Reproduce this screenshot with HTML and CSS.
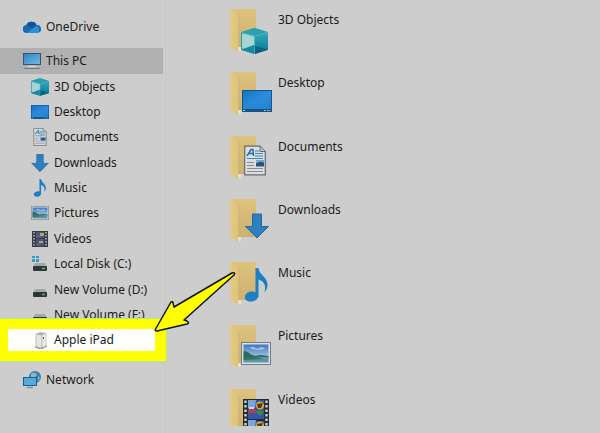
FILE: index.html
```html
<!DOCTYPE html>
<html lang="en">
<head>
<meta charset="utf-8">
<title>This PC</title>
<link rel="stylesheet" href="styles.css">
</head>
<body>
<svg class="defs" aria-hidden="true">
  <defs>
    <linearGradient id="g-screen" x1="0" y1="0" x2="1" y2="1"><stop offset="0" stop-color="#1473c4"/><stop offset=".5" stop-color="#2b8bda"/><stop offset="1" stop-color="#1478cc"/></linearGradient>
    <linearGradient id="g-pc" x1="0" y1="0" x2="1" y2="1"><stop offset="0" stop-color="#2d86c4"/><stop offset="1" stop-color="#72b9e4"/></linearGradient>
    <linearGradient id="g-front" x1="0" y1="0" x2="1" y2="0"><stop offset="0" stop-color="#e3cb86"/><stop offset="1" stop-color="#dcc27b"/></linearGradient>
    <linearGradient id="g-back" x1="0" y1="0" x2="0" y2="1"><stop offset="0" stop-color="#dec37e"/><stop offset="1" stop-color="#cbb06f"/></linearGradient>
    <linearGradient id="g-cube" x1="0" y1="0" x2="0" y2="1"><stop offset="0" stop-color="#35a9b8"/><stop offset="1" stop-color="#087494"/></linearGradient>
    <linearGradient id="g-sky" x1="0" y1="0" x2="0" y2="1"><stop offset="0" stop-color="#3d78c0"/><stop offset="1" stop-color="#d0e2ec"/></linearGradient>
  </defs>
  <symbol id="cube" viewBox="0 0 26 25">
    <path d="M13 0 26 4V21L13 25 0 21V4Z" fill="#2297ac"/>
    <path d="M0 4 13 0 26 4 13 8Z" fill="#2a9fb3"/>
    <path d="M1 5 13 8V19L1 20Z" fill="#a8d4d6"/>
    <path d="M0 21 13 16V25Z" fill="#168aa4"/>
    <path d="M13 8 26 4V21L13 25Z" fill="url(#g-cube)"/>
    <path d="M13 17 26 21 13 25Z" fill="#07637f"/>
    <path d="M0 4 13 8 26 4M13 8V25" fill="none" stroke="#5dbdc8" stroke-width=".7"/>
  </symbol>
  <symbol id="screen" viewBox="0 0 30 22" preserveAspectRatio="none">
    <rect width="30" height="22" fill="#16538a"/>
    <rect x="1" y="1" width="28" height="18" fill="url(#g-screen)"/>
    <path d="M29 1v18H10Z" fill="#3c99e2" opacity=".3"/>
    <path d="M1 20.500h2M22 20.500h1.500M25 20.500h1.500M27.500 20.500h1" stroke="#b5d5e8"/>
  </symbol>
  <symbol id="document" viewBox="0 0 22 30">
    <path d="M.7.7H16l5.300 5.300V29.300H.7Z" fill="#dcdedf" stroke="#666b70" stroke-width="1.200"/>
    <path d="M16 .7V6h5.300" fill="#bfc3c6" stroke="#666b70"/>
    <path d="M3 10.500 7 4h2l.5 6.500M5 8h4" fill="none" stroke="#216fae" stroke-width="1.500"/>
    <path d="M11 5.500h4M11 8h8M11 10.500h8M3 13h16" stroke="#3e89bd" stroke-width="1.200"/>
    <path d="M3 17h7M3 20h7M3 23h16M3 26h16" stroke="#858c91"/>
    <path d="M12 15h8v6h-8Z" fill="#265582"/><path d="M12 18q4-3 8-1v-2h-8Z" fill="#7baed2"/>
  </symbol>
  <symbol id="down" viewBox="0 0 24 25">
    <path d="M7.500.5h9V13h7L12 24.500.5 13h7Z" fill="#2f7fbd" stroke="#1f6ba8"/>
  </symbol>
  <symbol id="note" viewBox="0 0 23 34">
    <ellipse cx="6.500" cy="28.500" rx="6.800" ry="5" transform="rotate(-12 6.500 28.500)" fill="#1b7fc1"/>
    <path d="M10.500 0h3c.5 7 9 9 9 16.500 0 3-1 5.500-3 7.500 2-7-1-11-6-12.500V29h-3Z" fill="#1b7fc1"/>
  </symbol>
  <symbol id="picture" viewBox="0 0 30 23" preserveAspectRatio="none">
    <rect x=".5" y=".5" width="29" height="22" fill="#dce1e3" stroke="#737c83"/>
    <rect x="2.500" y="2.500" width="25" height="18" fill="url(#g-sky)"/>
    <path d="M2.500 9q4 0 7 3t10 1l8 1v2h-25Z" fill="#2c6a5c"/>
    <path d="M2.500 15h25v5.500h-25Z" fill="#5e95aa"/><path d="M2.500 15h13l7 2-20 1Z" fill="#34736a"/>
    <path d="M9 6q3-2 5 0t7-1l3 2q-8 2-15-1Z" fill="#d3e2ec" opacity=".7"/>
  </symbol>
  <symbol id="film" viewBox="0 0 26 34">
    <rect width="26" height="34" fill="#252a2e"/>
    <path d="M2.500 1.500V34M23.500 1.500V34" stroke="#c6cacc" stroke-width="2.500" stroke-dasharray="2.500 2"/>
    <path d="M5 1h16v19H5ZM5 22h16v12H5Z" fill="#3155a7"/>
    <g id="frame"><path d="M5 1h8l-1 8H5Z" fill="#7ba6dc"/><path d="M5 11q3-3 8 0v3H5Z" fill="#b83c4a"/><circle cx="17" cy="6.500" r="4" fill="#d9aa25"/><path d="m14 5 6-1-2 5h-3Z" fill="#513521"/><path d="m12 13 5-2 4 2-4 4Z" fill="#398752"/><path d="M6 8h5v2H6Z" fill="#d5d5e6"/></g>
    <use href="#frame" y="20"/>
  </symbol>
  <symbol id="folder" viewBox="0 0 27 43">
    <path d="M0 0h26v38H9V7Z" fill="url(#g-back)"/>
    <path d="M0 0 9 6v31l-1 6L0 38Z" fill="url(#g-front)"/>
    <path d="M9 6v31l-1 2" fill="none" stroke="#c9ad69" stroke-width=".7"/>
    <path d="M8 38h3v4H8Z" fill="#e4e0d5"/>
  </symbol>
  <symbol id="drive" viewBox="0 0 18 18">
    <path d="M4 8h10l2 4H2Z" fill="#a5a8a9"/><rect x="2" y="11" width="14" height="5" rx="1" fill="#303535"/><path d="M11 13.500h3" stroke="#4bbd65" stroke-width="1.500"/>
  </symbol>
  <symbol id="network" viewBox="0 0 18 18">
    <circle cx="12" cy="6" r="6" fill="#3d7fa8"/><path d="M8 3q4-3 6 1l-3 3-3-1ZM15 5l2 2-2 3Z" fill="#86bad0"/>
    <path d="M0 6h14v9H0Z" fill="#1c5e90"/><path d="M1 7h12v7H1Z" fill="#58aadd"/><path d="M4 16.500h6" stroke="#7997ab" stroke-width="1.500"/>
  </symbol>
  <symbol id="tower" viewBox="0 0 18 18">
    <path d="M5 3 9 1l6 1v13l-4 2-6-1Z" fill="#b6b6b6"/><path d="m5 3 6 1v13l-6-1Z" fill="#e6e6e6" stroke="#a1a1a1" stroke-width=".6"/><path d="m11 4 4-2v13l-4 2Z" fill="#efefef" stroke="#aaa" stroke-width=".6"/><path d="M12.500 6v2" stroke="#555"/><path d="m4 16 6 2 6-3" fill="none" stroke="#888"/>
  </symbol>
</svg>

<div class="explorer">
  <nav class="sidebar" aria-label="Folders">
    <a class="row" href="#"><svg class="icon" viewBox="0 0 18 18"><path d="M4 15a4 4 0 0 1-.5-8A5.500 5.500 0 0 1 13.500 7a4 4 0 0 1 1 8Z" fill="#1769b4"/><path d="M3.500 7A5.500 5.500 0 0 1 13.500 7L9 10Z" fill="#11529b"/><path d="M4 15 13 8a3.800 3.800 0 0 1 1.500 7Z" fill="#2d91d5"/></svg>OneDrive</a>
    <a class="row current" href="#" aria-current="page"><svg class="icon" viewBox="0 0 18 18"><path d="M0 1h18v12H0Z" fill="#35536b"/><path d="M1 2h16v10H1Z" fill="url(#g-pc)"/><path d="M5 14.500h8" stroke="#d8dde0"/><path d="M1 16.500h16" stroke="#677d8e"/></svg>This PC</a>
    <ul class="children">
      <li><a class="row" href="#"><svg class="icon"><use href="#cube"/></svg>3D Objects</a></li>
      <li><a class="row" href="#"><svg class="icon"><use href="#screen" y="2" height="14"/></svg>Desktop</a></li>
      <li><a class="row" href="#"><svg class="icon"><use href="#document"/></svg>Documents</a></li>
      <li><a class="row" href="#"><svg class="icon"><use href="#down"/></svg>Downloads</a></li>
      <li><a class="row" href="#"><svg class="icon"><use href="#note"/></svg>Music</a></li>
      <li><a class="row" href="#"><svg class="icon"><use href="#picture" y="2" height="14"/></svg>Pictures</a></li>
      <li><a class="row" href="#"><svg class="icon" viewBox="0 0 18 18"><rect x="1" y="1" width="16" height="16" fill="#343b41"/><path d="M3 2v15M15 2v15" stroke="#bbb" stroke-width="1.500" stroke-dasharray="1.500 1.500"/><path d="M5 2h8v6H5ZM5 9h8v7H5Z" fill="#3b5897"/><path d="M9 3h4v3H9ZM8 11h4v2H8Z" fill="#c2a33f"/><path d="M5 5h4v3H5ZM6 13h3v3H6Z" fill="#934a64"/></svg>Videos</a></li>
      <li><a class="row" href="#"><svg class="icon" viewBox="0 0 18 18"><use href="#drive"/><path d="M1 1h3v2H1ZM5 1h3v2H5ZM1 4h3v3H1ZM5 4h3v3H5Z" fill="#2d9dcb"/></svg>Local Disk (C:)</a></li>
      <li><a class="row" href="#"><svg class="icon"><use href="#drive"/></svg>New Volume (D:)</a></li>
      <li><a class="row" href="#"><svg class="icon"><use href="#drive"/></svg>New Volume (F:)</a></li>
      <li class="highlight"><a class="row" href="#"><svg class="icon"><use href="#tower"/></svg>Apple iPad</a></li>
    </ul>
    <a class="row network" href="#"><svg class="icon"><use href="#network"/></svg>Network</a>
  </nav>

  <main class="content">
    <ul class="folders">
      <li><a class="folder" href="#"><svg class="folder-icon"><use href="#folder" y="1" width="27" height="43"/><use href="#cube" x="11" y="20" width="27" height="26"/></svg>3D Objects</a></li>
      <li><a class="folder" href="#"><svg class="folder-icon"><use href="#folder" y="1" width="27" height="43"/><use href="#screen" x="12" y="19" width="30" height="22"/></svg>Desktop</a></li>
      <li><a class="folder" href="#"><svg class="folder-icon"><use href="#folder" y="1" width="27" height="43"/><use href="#document" x="14" y="10" width="22" height="31"/></svg>Documents</a></li>
      <li><a class="folder" href="#"><svg class="folder-icon"><use href="#folder" y="1" width="27" height="43"/><use href="#down" x="15" y="15" width="24" height="26"/></svg>Downloads</a></li>
      <li><a class="folder" href="#"><svg class="folder-icon"><use href="#folder" y="1" width="27" height="43"/><use href="#note" x="15" y="7" width="23" height="34"/></svg>Music</a></li>
      <li><a class="folder" href="#"><svg class="folder-icon"><use href="#folder" y="1" width="27" height="43"/><use href="#picture" x="11" y="18" width="30" height="23"/></svg>Pictures</a></li>
      <li><a class="folder" href="#"><svg class="folder-icon"><use href="#folder" y="1" width="27" height="43"/><use href="#film" x="13" y="11" width="26" height="34"/></svg>Videos</a></li>
    </ul>
  </main>

  <svg class="pointer" viewBox="0 0 84 64" aria-hidden="true"><path d="M3 61 19 33q2-1 2 1l1 4L80 4q4-1 2 2L32 51l3 1q3 2 0 3L5 62q-2 0-2-1Z" fill="#ff0" stroke="#111" stroke-width="1.500" stroke-linejoin="round"/></svg>
</div>
</body>
</html>
```
FILE: styles.css
```css
* {
  box-sizing: border-box;
}

body {
  margin: 0;
  background: #cdcdcd;
  color: #1b1b1b;
  font: 12px/18px "Noto Sans", "Open Sans", sans-serif;
}

ul {
  margin: 0;
  padding: 0;
  list-style: none;
}

a {
  color: inherit;
  text-decoration: none;
}

.defs {
  position: absolute;
  width: 0;
  height: 0;
}

.explorer {
  position: relative;
  display: grid;
  grid-template-columns: 166px 1fr;
  height: 100vh;
  overflow: hidden;
}

.sidebar {
  display: flex;
  flex-direction: column;
  padding-top: 14px;
  border-right: 1px solid #c8c8c8;
}

.row {
  display: flex;
  align-items: center;
  gap: 5px;
  height: 26px;
  padding-left: 23px;
  white-space: nowrap;
}

.icon {
  flex: none;
  width: 18px;
  height: 18px;
}

.current {
  margin: 8px 2px 0 0;
  background: #b1b1b1;
}

.children {
  display: grid;
  grid-auto-rows: 1fr;
  height: 279px;
}

.children .row {
  height: 100%;
  padding-left: 31px;
}

.network {
  margin-top: 14px;
}

.highlight {
  position: relative;
}

.highlight::before {
  content: "";
  position: absolute;
  inset: -9px -1px -8px 0;
  border: solid #ff0;
  border-width: 10px 11px 10px 8px;
  background: #fff;
  box-shadow: 0 0 0 1px #a9ee86;
}

.highlight .row {
  position: relative;
}

.content {
  height: calc(100vh - 7px);
  padding: 8px 0 0 64px;
  overflow: hidden;
}

.folders {
  display: grid;
  grid-auto-rows: 1fr;
  height: 443px;
}

.folder {
  display: flex;
  gap: 4px;
  line-height: 24px;
}

.folder-icon {
  flex: none;
  width: 44px;
  height: 48px;
}

.pointer {
  position: absolute;
  top: 269px;
  left: 152px;
  width: 84px;
  height: 64px;
}
```
